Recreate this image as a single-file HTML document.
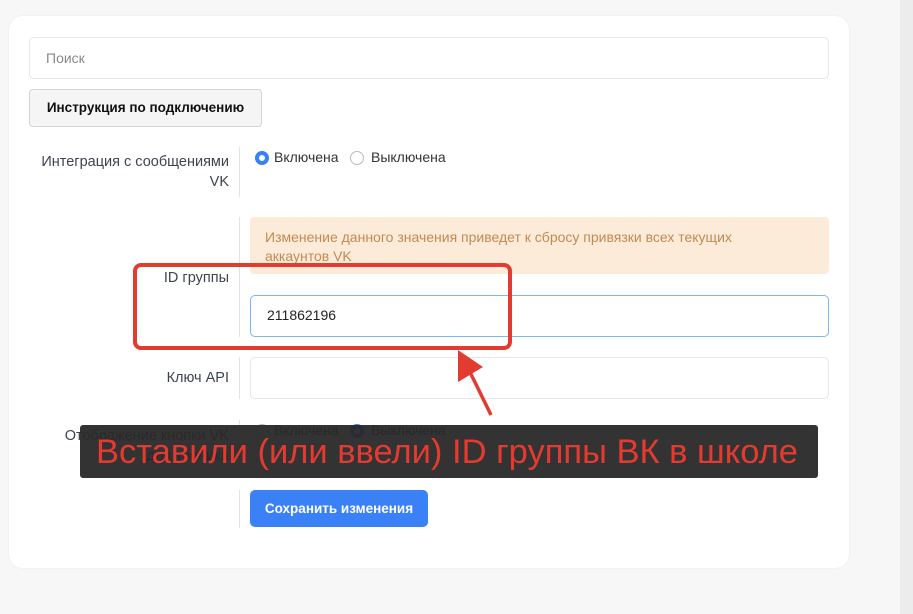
<!DOCTYPE html>
<html><head><meta charset="utf-8"><style>
body{margin:0;width:913px;height:614px;background:#f7f7f7;font-family:"Liberation Sans",sans-serif;position:relative;overflow:hidden;}
.strip{position:absolute;left:900px;top:0;width:13px;height:614px;background:#ececec;}
.card{position:absolute;left:9px;top:16px;width:840px;height:552px;background:#fff;border-radius:14px;box-shadow:0 0 2px rgba(0,0,0,.06);}
.abs{position:absolute;}
.input{position:absolute;border:1px solid #e6e6e6;border-radius:5px;background:#fff;box-sizing:border-box;}
.lbl{position:absolute;right:684px;text-align:right;font-size:14.5px;color:#3d4450;line-height:20px;white-space:nowrap;}
.vl{position:absolute;left:239px;width:1px;background:#e3e3e3;}
.radio{position:absolute;width:14px;height:14px;border-radius:50%;box-sizing:border-box;}
.rt{position:absolute;font-size:14px;color:#333;}
</style></head><body>
<div class="strip"></div>
<div class="card"></div>
<div class="input" style="left:29px;top:37px;width:800px;height:42px;"></div>
<div class="abs" style="left:46px;top:50px;font-size:14px;color:#888;">Поиск</div>
<div class="abs" style="left:29px;top:89px;width:231px;height:36px;border:1px solid #d6d6d6;border-radius:4px;background:#f5f5f5;font-size:13.5px;font-weight:bold;color:#111;line-height:36px;text-align:center;">Инструкция по подключению</div>

<div class="lbl" style="top:152px;">Интеграция с сообщениями<br>VK</div>
<div class="vl" style="top:147px;height:50px;"></div>
<div class="radio" style="left:255px;top:151px;border:4px solid #3a80f6;"></div>
<div class="rt" style="left:274px;top:149px;">Включена</div>
<div class="radio" style="left:350px;top:151px;border:1px solid #bbb;"></div>
<div class="rt" style="left:371px;top:149px;">Выключена</div>

<div class="vl" style="top:217px;height:120px;"></div>
<div class="abs" style="left:250px;top:217px;width:579px;height:57px;background:#fcebd8;border-radius:4px;"></div>
<div class="abs" style="left:265px;top:228px;width:520px;font-size:14px;line-height:19px;color:#c38a52;">Изменение данного значения приведет к сбросу привязки всех текущих аккаунтов VK</div>
<div class="lbl" style="top:268px;">ID группы</div>
<div class="input" style="left:250px;top:295px;width:579px;height:42px;border-color:#7ab7f3;"></div>
<div class="abs" style="left:267px;top:307px;font-size:14px;color:#222;">211862196</div>

<div class="lbl" style="top:368px;">Ключ API</div>
<div class="vl" style="top:357px;height:42px;"></div>
<div class="input" style="left:250px;top:357px;width:579px;height:42px;"></div>

<div class="lbl" style="top:426px;">Отображение кнопки VK<br>для ученика</div>
<div class="vl" style="top:420px;height:50px;"></div>
<div class="radio" style="left:255px;top:424px;border:1px solid #bbb;"></div>
<div class="rt" style="left:274px;top:422px;">Включена</div>
<div class="radio" style="left:350px;top:424px;border:4px solid #3a80f6;"></div>
<div class="rt" style="left:371px;top:422px;">Выключена</div>

<div class="vl" style="top:490px;height:38px;"></div>
<div class="abs" style="left:250px;top:490px;width:178px;height:37px;background:#3a80f6;border-radius:5px;color:#fff;font-size:13.5px;font-weight:bold;line-height:37px;text-align:center;">Сохранить изменения</div>

<div class="abs" style="left:80px;top:425px;width:738px;height:53px;background:rgba(40,40,40,.95);border-radius:3px;"></div>
<div class="abs" style="left:96px;top:429px;font-size:34.5px;color:#e53a30;white-space:nowrap;line-height:46px;">Вставили (или ввели) ID группы ВК в школе</div>

<svg class="abs" style="left:0;top:0" width="913" height="614">
<rect x="135" y="265" width="375" height="83" rx="6" fill="none" stroke="#e33b2f" stroke-width="4"/>
<line x1="491" y1="415" x2="468" y2="368" stroke="#e33b2f" stroke-width="3.5"/>
<polygon points="458,350 458,382 483,367" fill="#e33b2f"/>
</svg>
</body></html>
